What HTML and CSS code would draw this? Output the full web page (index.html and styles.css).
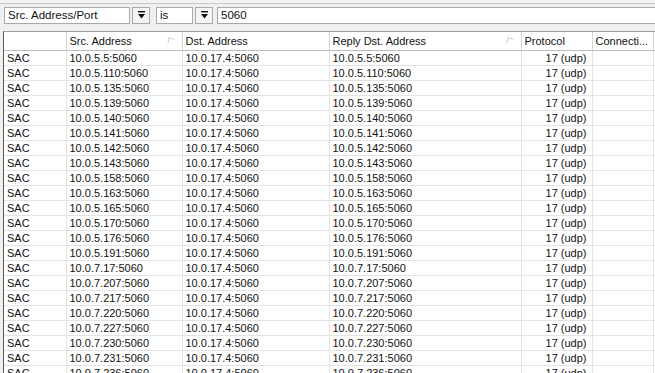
FILE: index.html
```html
<!DOCTYPE html>
<html lang="en">
<head>
  <meta charset="UTF-8" />
  <title>Connections</title>
  <link rel="stylesheet" href="styles.css">
</head>
<body>
  <div class="topstrip"></div>

  <!-- filter bar -->
  <div class="filter">
    <div class="field field-prop">Src. Address/Port</div>
    <div class="dropbtn">
      <svg width="9" height="8" viewBox="0 0 9 8"><rect x="1" y="0" width="7" height="1.4" fill="#111"/><path d="M1 3 H8 L4.5 7.5 Z" fill="#111"/></svg>
    </div>
    <div class="field field-op">is</div>
    <div class="dropbtn">
      <svg width="9" height="8" viewBox="0 0 9 8"><rect x="1" y="0" width="7" height="1.4" fill="#111"/><path d="M1 3 H8 L4.5 7.5 Z" fill="#111"/></svg>
    </div>
    <div class="field field-value">5060</div>
  </div>

  <div class="grid">
    <table>
      <colgroup>
        <col class="c-type"><col class="c-src"><col class="c-dst"><col class="c-reply"><col class="c-proto"><col class="c-conn"><col>
      </colgroup>
      <thead>
        <tr>
          <th></th>
          <th>Src. Address <span class="sort"></span></th>
          <th>Dst. Address</th>
          <th>Reply Dst. Address <span class="sort"></span></th>
          <th>Protocol</th>
          <th>Connecti...</th>
          <th></th>
        </tr>
      </thead>
      <tbody id="rows"></tbody>
    </table>
  </div>

  <script>
    const hosts = ['10.0.5.5', '10.0.5.110', '10.0.5.135', '10.0.5.139', '10.0.5.140', '10.0.5.141',
      '10.0.5.142', '10.0.5.143', '10.0.5.158', '10.0.5.163', '10.0.5.165', '10.0.5.170',
      '10.0.5.176', '10.0.5.191', '10.0.7.17', '10.0.7.207', '10.0.7.217', '10.0.7.220',
      '10.0.7.227', '10.0.7.230', '10.0.7.231', '10.0.7.236'];
    const body = document.getElementById('rows');
    hosts.forEach(h => {
      const tr = document.createElement('tr');
      tr.innerHTML = `<td>SAC</td><td>${h}:5060</td><td>10.0.17.4:5060</td><td>${h}:5060</td><td class="num">17 (udp)</td><td></td><td></td>`;
      body.appendChild(tr);
    });
  </script>
</body>
</html>
```

FILE: styles.css
```css
body {
  margin: 0;
  background: #f0f0f0;
  font-family: "Liberation Sans", Arial, sans-serif;
  font-size: 11px;
  color: #111;
  overflow: hidden;
  height: 373px;
}

.topstrip {
  height: 3px;
  background: #f3f3f3;
  border-bottom: 1px solid #c9c9c9;
}

.filter {
  display: flex;
  align-items: center;
  gap: 2px;
  padding: 2px 0 0 4px;
  height: 18px;
}

.field {
  box-sizing: border-box;
  height: 17px;
  line-height: 15px;
  background: #fff;
  border: 1px solid #a9a9a9;
  padding: 0 3px;
  font-size: 11.5px;
}

.field-prop { width: 126px; }
.field-op { width: 37px; margin-left: 4px; }
.field-value { flex: 1; margin-left: 2px; border-right: none; }

.dropbtn {
  box-sizing: border-box;
  width: 18px;
  height: 17px;
  background: #f4f4f4;
  border: 1px solid #a9a9a9;
  display: flex;
  align-items: center;
  justify-content: center;
}

.grid {
  margin-top: 7px;
  border-top: 1px solid #a0a0a0;
  border-left: 1px solid #555;
  margin-left: 3px;
  background: #fff;
  height: 400px;
}

table {
  border-collapse: collapse;
  table-layout: fixed;
  width: 652px;
}

.c-type { width: 62px; }
.c-src { width: 116px; }
.c-dst { width: 147px; }
.c-reply { width: 192px; }
.c-proto { width: 71px; }
.c-conn { width: 61px; }

th {
  height: 18px;
  padding: 0 0 0 3px;
  text-align: left;
  font-weight: normal;
  background: #fff;
  border-right: 1px solid #d5d5d5;
  border-bottom: 1px solid #bdbdbd;
  white-space: nowrap;
  overflow: hidden;
  position: relative;
}

.sort {
  position: absolute;
  right: 8px;
  top: 6px;
  width: 5px;
  height: 5px;
  border-left: 1px solid #cfcfcf;
  border-top: 1px solid #cfcfcf;
  transform: rotate(15deg);
}

td {
  height: 13px;
  padding: 1px 0 0 3px;
  border-right: 1px solid #e3e3e3;
  border-bottom: 1px solid #e3e3e3;
  white-space: nowrap;
  overflow: hidden;
  line-height: 13px;
}

td.num {
  text-align: right;
  padding-right: 5px;
}
```
